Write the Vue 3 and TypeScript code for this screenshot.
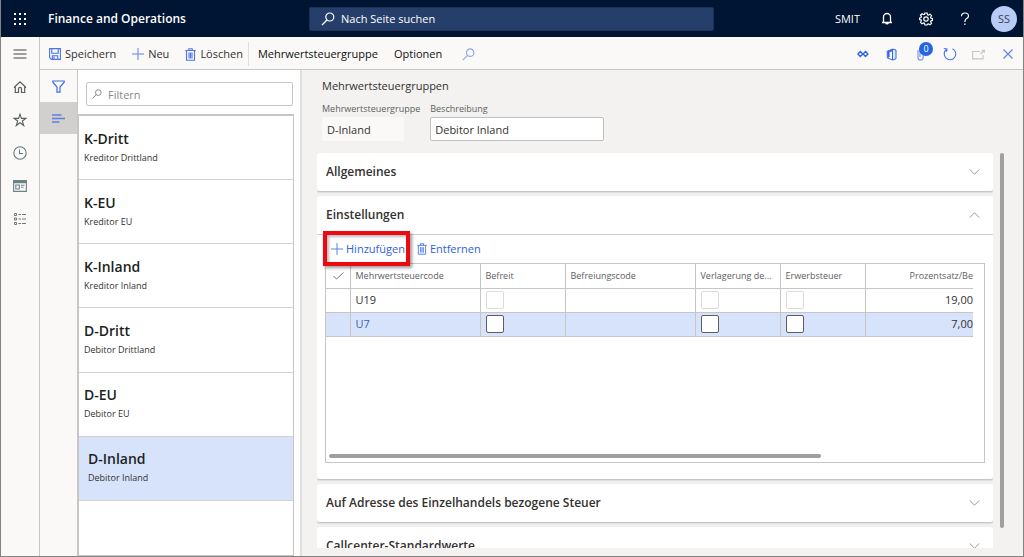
<script setup lang="ts">
import { ref } from 'vue'

interface Group { code: string; name: string }
interface TaxLine { code: string; exempt: boolean; reverse: boolean; useTax: boolean; percent: string; selected: boolean }

const groups: Group[] = [
  { code: 'K-Dritt', name: 'Kreditor Drittland' },
  { code: 'K-EU', name: 'Kreditor EU' },
  { code: 'K-Inland', name: 'Kreditor Inland' },
  { code: 'D-Dritt', name: 'Debitor Drittland' },
  { code: 'D-EU', name: 'Debitor EU' },
  { code: 'D-Inland', name: 'Debitor Inland' },
]
const active = ref('D-Inland')
const description = ref('Debitor Inland')
const pageSearch = ref('')
const filter = ref('')
const lines = ref<TaxLine[]>([
  { code: 'U19', exempt: false, reverse: false, useTax: false, percent: '19,00', selected: false },
  { code: 'U7', exempt: false, reverse: false, useTax: false, percent: '7,00', selected: true },
])
const lower = ['Auf Adresse des Einzelhandels bezogene Steuer', 'Callcenter-Standardwerte']
const dots = [1, 6, 11]
</script>

<template>
  <div class="app">
    <header class="top">
      <button class="icon waffle" aria-label="App-Startfeld">
        <svg width="14" height="14" viewBox="0 0 14 14" fill="#fff">
          <template v-for="y in dots" :key="y">
            <rect v-for="x in dots" :key="x" :x="x" :y="y" width="2" height="2" />
          </template>
        </svg>
      </button>
      <div class="brand">Finance and Operations</div>
      <label class="search">
        <svg width="14" height="14" viewBox="0 0 14 14" fill="none" stroke="#fff" stroke-width="1.2"><circle cx="8.8" cy="5" r="4" /><path d="M6 8 1 13" /></svg>
        <input v-model="pageSearch" aria-label="Nach Seite suchen" placeholder="Nach Seite suchen" />
      </label>
      <div class="account">
        <span class="company">SMIT</span>
        <button class="icon" aria-label="Benachrichtigungen">
          <svg width="12" height="14" viewBox="0 0 12 14" fill="none" stroke="#fff" stroke-width="1.3"><path d="M1 10.500h10M2.500 10.500V5a3.500 3.500 0 0 1 7 0v5.500M4.700 11a1.400 1.400 0 0 0 2.600 0" /></svg>
        </button>
        <button class="icon" aria-label="Einstellungen">
          <svg width="14" height="14" viewBox="0 0 14 14" fill="none" stroke="#fff" stroke-width="1.200"><path d="M5.900 1h2.200l.4 1.700 1 .4 1.500-.9 1.500 1.500-.9 1.500.4 1 1.500.3v1.900l-1.500.4-.4 1 .9 1.500-1.500 1.500-1.500-.9-1 .4L8.100 13H5.900l-.4-1.700-1-.4-1.500.9L1.500 10.300l.9-1.500-.4-1L.6 7.500V6l1.400-.4.4-1-.9-1.500L3 1.700l1.500.9 1-.4z" /><circle cx="7" cy="7" r="2.200" /></svg>
        </button>
        <button class="icon" aria-label="Hilfe">
          <svg width="10" height="14" viewBox="0 0 10 14" fill="none" stroke="#fff" stroke-width="1.200"><path d="M1.500 4.200C1.500 2 3 1 4.900 1S8.500 2.100 8.500 4 7 6.200 5.900 7.100C5 7.900 4.900 8.500 4.900 10M4.900 11.500v1.600" /></svg>
        </button>
        <button class="avatar">SS</button>
      </div>
    </header>

    <div class="body">
      <nav class="rail" aria-label="Navigation">
        <button class="icon" aria-label="Menü"><svg width="14" height="14" viewBox="0 0 14 14" stroke="#444" stroke-width="1.200"><path d="M.5 3h13M.5 7h13M.5 11h13" /></svg></button>
        <button class="icon" aria-label="Startseite"><svg width="14" height="14" viewBox="0 0 14 14" fill="none" stroke="#5a605e" stroke-width="1.200"><path d="M1 7.500 7 1.800l6 5.700M2.300 6.500v6h3.200V8.800a1.500 1.500 0 0 1 3 0v3.700h3.200v-6" /></svg></button>
        <button class="icon" aria-label="Favoriten"><svg width="14" height="14" viewBox="0 0 14 14" fill="none" stroke="#56605e" stroke-width="1.100"><path d="m7 1.200 1.400 4.200h4.400L9.300 8l1.400 4.500L7 9.800l-3.700 2.700L4.700 8 1.200 5.400h4.400z" /></svg></button>
        <button class="icon" aria-label="Zuletzt verwendet"><svg width="14" height="14" viewBox="0 0 14 14" fill="none" stroke="#667a80" stroke-width="1.100"><circle cx="7" cy="7" r="6.200" /><path d="M6.500 3.500V7.500H10" /></svg></button>
        <button class="icon" aria-label="Arbeitsbereiche"><svg width="14" height="14" viewBox="0 0 14 14" fill="none" stroke="#6b8286" stroke-width="1.100"><path d="M.6 1.600h12.800v10.800H.6zM.6 3.800h12.800M.6 2.700h12.800M2.800 6h3.500v4H2.800zM8 6.200h3.500M8 8.200h2.500" /></svg></button>
        <button class="icon" aria-label="Module"><svg width="14" height="14" viewBox="0 0 14 14" fill="none" stroke="#6e787e" stroke-width="1"><path d="M1.500 1.500h2v2h-2zM1.500 6h2v2h-2zM1.500 10.500h2v2h-2zM5.500 2.500H8M9 2.500h4M5.500 7H8M9 7h4M5.500 11.500H8M9 11.500h4" /></svg></button>
      </nav>

      <div class="work">
        <div class="bar" role="toolbar">
          <button class="cmd save"><svg width="12" height="12" viewBox="0 0 12 12" fill="none" stroke="#4a74e8" stroke-width="1.100"><path d="M.6.6h10.800v10.800H2.400L.6 9.800zM2.800.6v4.600h6.400V.6M3.300 11.400V7.800h5.400v3.600M5 8.500v2.500" /></svg>Speichern</button>
          <button class="cmd new"><svg width="12" height="12" viewBox="0 0 12 12" stroke="#5d82ee"><path d="M6 0v12M0 6h12" /></svg>Neu</button>
          <button class="cmd"><svg width="11" height="13" viewBox="0 0 11 13" fill="none" stroke="#4a74e8" stroke-width="1.100"><path d="M.3 2.500h10.400M3.800 2.500V.7h3.400v1.800M1.500 2.500v9.700h8V2.500M4 4.500v6M5.500 4.500v6M7 4.500v6" /></svg>Löschen</button>
          <span class="sep"></span>
          <button class="cmd strong">Mehrwertsteuergruppe</button>
          <button class="cmd strong">Optionen</button>
          <button class="icon find" aria-label="Suchen"><svg width="13" height="13" viewBox="0 0 14 14" fill="none" stroke="#8fa5f2" stroke-width="1.200"><circle cx="8.800" cy="5" r="4" /><path d="M6 8 .8 13" /></svg></button>
          <div class="tools">
            <button class="icon" aria-label="Power Apps"><svg width="12" height="8" viewBox="0 0 12 8" fill="none" stroke="#2f62e8" stroke-width="1.400"><path d="M3.300 1.500.9 4l2.400 2.500L5.700 4zM8.500 1.500 6.100 4l2.400 2.500L10.900 4z" /></svg></button>
            <button class="icon" aria-label="In Microsoft Office öffnen"><svg width="11" height="13" viewBox="0 0 11 13" fill="none" stroke="#3468e8"><path d="M6.500 1 1.200 3v6.800l2-.8V4l3.300-1z" fill="#3468e8" stroke-width=".6" /><path d="M6.500 1v11l3.500-1.200V2z" fill="#dfe7fc" /><path d="M1.200 9.800 6.500 12" /></svg></button>
            <button class="icon attach" aria-label="Anlagen"><svg width="8" height="14" viewBox="0 0 8 14" fill="none" stroke="#7c98ee" stroke-width="1.200"><path d="M1 3v7.500a2.600 2.600 0 0 0 5.200 0V3a1.600 1.600 0 0 0-3.200 0v7" /></svg><span class="badge">0</span></button>
            <button class="icon" aria-label="Aktualisieren"><svg width="14" height="14" viewBox="0 0 14 14" fill="none" stroke="#4a74e8" stroke-width="1.100"><path d="M9.500 1.700A5.800 5.800 0 1 1 3.500 2.300M.8 1.500l3.200.4-.5 3" /></svg></button>
            <button class="icon" aria-label="In neuem Fenster öffnen"><svg width="13" height="11" viewBox="0 0 13 11" fill="none" stroke="#c6c4c2" stroke-width="1.100"><path d="M8 2.500H.6v7.400h10.400V6M8.500 5l3.500-3.500M9.800 1.200h2.500v2.500" /></svg></button>
            <button class="icon" aria-label="Schließen"><svg width="10" height="10" viewBox="0 0 10 10" stroke="#5d82ee" stroke-width="1.100"><path d="m.5.5 9 9M9.500.5l-9 9" /></svg></button>
          </div>
        </div>

        <div class="content">
          <div class="modes">
            <button class="icon" aria-label="Filter"><svg width="13" height="13" viewBox="0 0 13 13" fill="none" stroke="#3f6de6" stroke-width="1.200"><path d="M.8 1h11.400v1.200L8 7v5.200H5V7L.8 2.200z" /></svg></button>
            <button class="icon on" aria-label="Liste"><svg width="13" height="9" viewBox="0 0 13 9" stroke="#5a7de8" stroke-width="1.300"><path d="M0 1h9.500M0 4.500h13M0 8h7.500" /></svg></button>
          </div>

          <aside class="side">
            <label class="filter">
              <svg width="10" height="10" viewBox="0 0 14 14" fill="none" stroke="#888" stroke-width="1.400"><circle cx="8.800" cy="5" r="4" /><path d="M6 8 .8 13" /></svg>
              <input v-model="filter" aria-label="Filtern" placeholder="Filtern" />
            </label>
            <ul class="list">
              <li v-for="g in groups" :key="g.code">
                <button class="item" :class="{ active: g.code === active }" @click="active = g.code">
                  <span class="code">{{ g.code }}</span>
                  <span class="name">{{ g.name }}</span>
                </button>
              </li>
            </ul>
          </aside>

          <main class="main">
            <h1>Mehrwertsteuergruppen</h1>
            <div class="fields">
              <div class="field">
                <label for="grp">Mehrwertsteuergruppe</label>
                <input id="grp" class="ro" value="D-Inland" readonly />
              </div>
              <div class="field">
                <label for="desc">Beschreibung</label>
                <input id="desc" v-model="description" />
              </div>
            </div>

            <div class="scroller">
              <div class="cards">
                <section class="card">
                  <button class="head">Allgemeines<svg width="11" height="6" viewBox="0 0 11 6" fill="none" stroke="#999"><path d="m.8.5 4.700 4.700L10.200.5" /></svg></button>
                </section>
                <section class="card open">
                  <button class="head">Einstellungen<svg width="11" height="6" viewBox="0 0 11 6" fill="none" stroke="#999"><path d="M.8 5.500 5.500.8l4.700 4.700" /></svg></button>
                  <div class="actions">
                    <button class="act marked"><svg width="12" height="12" viewBox="0 0 12 12" stroke="#5d82ee"><path d="M6 0v12M0 6h12" /></svg>Hinzufügen</button>
                    <button class="act"><svg width="10" height="12" viewBox="0 0 11 13" fill="none" stroke="#5d82ee" stroke-width="1.100"><path d="M.3 2.500h10.400M3.800 2.500V.7h3.400v1.800M1.500 2.500v9.700h8V2.500M4 4.500v6M5.500 4.500v6M7 4.500v6" /></svg>Entfernen</button>
                  </div>
                  <div class="grid">
                    <table>
                      <colgroup><col class="c-mark" /><col class="c-wide" /><col class="c-flag" /><col class="c-wide" /><col class="c-flag" /><col class="c-flag" /><col /></colgroup>
                      <thead>
                        <tr>
                          <th class="mark" aria-label="Auswahl"><svg width="11" height="8" viewBox="0 0 11 8" fill="none" stroke="#777"><path d="m.5 4 3 3L10.500.5" /></svg></th>
                          <th>Mehrwertsteuercode</th><th>Befreit</th><th>Befreiungscode</th><th>Verlagerung de...</th><th>Erwerbsteuer</th><th class="num">Prozentsatz/Be</th>
                        </tr>
                      </thead>
                      <tbody>
                        <tr v-for="l in lines" :key="l.code" :class="{ sel: l.selected }">
                          <td></td>
                          <td class="link">{{ l.code }}</td>
                          <td><input v-model="l.exempt" type="checkbox" aria-label="Befreit" /></td>
                          <td></td>
                          <td><input v-model="l.reverse" type="checkbox" aria-label="Verlagerung" /></td>
                          <td><input v-model="l.useTax" type="checkbox" aria-label="Erwerbsteuer" /></td>
                          <td class="num">{{ l.percent }}</td>
                        </tr>
                      </tbody>
                    </table>
                    <div class="hbar"></div>
                  </div>
                </section>
                <section v-for="t in lower" :key="t" class="card">
                  <button class="head">{{ t }}<svg width="11" height="6" viewBox="0 0 11 6" fill="none" stroke="#999"><path d="m.8.5 4.700 4.700L10.200.5" /></svg></button>
                </section>
              </div>
              <div class="vbar"></div>
            </div>
          </main>
        </div>
      </div>
    </div>
  </div>
</template>

<style>
body { margin: 0; overflow: hidden; }
</style>

<style scoped>
* { box-sizing: border-box; }
.app { display: flex; flex-direction: column; height: 100vh; font-family: "Open Sans", "Noto Sans", sans-serif; font-size: 11px; line-height: 16px; color: #323130; background: #faf9f8; border: 1px solid #858381; border-top: 0; }
button, input { font: inherit; color: inherit; }
button { display: flex; align-items: center; border: 0; padding: 0; background: none; text-align: left; white-space: nowrap; }
input { min-width: 0; border: 0; padding: 0; outline: 0; background: none; }
svg { flex: none; display: block; }
.icon { justify-content: center; flex: none; }

.top { display: grid; grid-template-columns: 38px 270px minmax(0, 405px) 1fr; align-items: center; height: 37px; flex: none; background: #001433; color: #fff; }
.brand { padding-left: 9px; font-size: 12px; font-weight: 600; white-space: nowrap; }
.search { display: flex; align-items: center; gap: 6px; height: 24px; padding-left: 11px; background: #263f6a; border: 1px solid #1d3157; border-radius: 2px; }
.search input { flex: 1; }
.search input::placeholder { color: #fff; opacity: 1; }
.account { display: flex; align-items: center; justify-content: flex-end; padding-right: 6px; }
.company { margin-right: 7px; }
.account .icon { width: 39px; }
.avatar { justify-content: center; width: 26px; height: 26px; margin-left: 7px; border-radius: 50%; background: #b9cbf7; color: #3b4252; }

.body { display: flex; flex: 1; min-height: 0; }
.rail { flex: none; width: 39px; margin-right: -1px; border-right: 1px solid #c8c6c4; }
.rail .icon { width: 38px; height: 33px; }
.work { flex: 1; min-width: 0; display: flex; flex-direction: column; }
.bar { display: flex; align-items: center; flex: none; height: 33px; padding: 2px 10px 0; border-bottom: 1px solid #c8c6c4; }
.cmd { gap: 4px; margin-right: 16px; }
.cmd.strong { font-weight: 500; color: #11100f; }
.sep { width: 1px; height: 24px; margin: 0 9px 0 -11px; background: #e1dfdd; }
.find { margin-left: 4px; }
.tools { display: flex; margin-left: auto; }
.tools .icon { width: 29px; height: 26px; }
.tools .icon:last-child { margin-right: -9px; }
.attach { position: relative; }
.badge { position: absolute; top: 1px; left: 13px; width: 14px; height: 14px; border-radius: 50%; background: #2266e3; color: #fff; font-size: 9px; line-height: 14px; text-align: center; }

.content { flex: 1; min-height: 0; display: flex; }
.modes { flex: none; width: 38px; border-left: 1px solid #c8c6c4; }
.modes .icon { width: 100%; height: 32px; }
.modes .on { background: #d2d0ce; }
.side { flex: none; width: 225px; display: flex; flex-direction: column; padding-right: 6px; background: #fff; border-left: 1px solid #c8c6c4; border-right: 2px solid #e1dfdd; }
.filter { display: flex; align-items: center; gap: 6px; height: 24px; flex: none; margin: 12px 1px 8px 8px; padding-left: 5px; border: 1px solid #c8c6c4; border-radius: 2px; }
.filter input { flex: 1; padding-top: 2px; }
.filter input::placeholder { color: #8a8886; opacity: 1; }
.list { flex: 1; display: grid; grid-auto-rows: 1fr; margin: 0; padding: 0 0 54px; list-style: none; border: 1px solid #c8c6c4; border-top-width: 2px; }
.list li { display: flex; border-bottom: 1px solid #d2d0ce; }
.item { flex: 1; flex-direction: column; align-items: flex-start; justify-content: center; padding: 0 5px; }
.item.active { padding-left: 9px; background: #d7e3fb; }
.code { font-size: 14px; line-height: 20px; font-weight: 600; color: #201f1e; }
.name { font-size: 9px; line-height: 18px; }

.main { flex: 1; min-width: 0; display: flex; flex-direction: column; padding: 8px 19px 8px 15px; background: #f3f2f1; }
h1 { margin: 0 5px; font-size: 11px; line-height: 16px; font-weight: 400; }
.fields { display: flex; gap: 10px; margin: 8px 5px 12px; }
.field { display: flex; flex-direction: column; }
.field label { font-size: 9px; line-height: 14px; margin-bottom: 1px; color: #605e5c; }
.field input { width: 174px; height: 24px; padding: 0 4px; border: 1px solid #c2c0be; border-radius: 2px; background: #fff; }
.field .ro { width: 82px; border-color: transparent; background: #faf9f8; }
.scroller { flex: 1; min-height: 0; display: flex; gap: 7px; }
.cards { flex: 1; min-width: 0; overflow: hidden; display: flex; flex-direction: column; gap: 5px; }
.card { flex: none; background: #fff; border-radius: 2px; box-shadow: 0 1px 2px #00000040; }
.card .head { justify-content: space-between; width: 100%; height: 38px; padding: 0 13px 0 9px; font-size: 12px; font-weight: 600; }
.card.open { padding-bottom: 16px; }
.open .head { height: 39px; border-bottom: 1px solid #d2d0ce; }
.actions { display: flex; gap: 12px; height: 28px; padding-left: 14px; }
.act { gap: 3px; color: #2f62dd; }
.marked { position: relative; }
.marked::after { content: ""; position: absolute; inset: -4px -5px -3px -8px; border: 4px solid #ee0810; box-shadow: 2px 2px 3px #0006, inset 2px 2px 3px #0004; }
.grid { display: flex; flex-direction: column; height: 200px; margin: 0 8px; padding: 0 11px 4px 0; border: 1px solid #c8c6c4; }
table { width: 100%; table-layout: fixed; border-collapse: collapse; }
.c-mark { width: 24px; }
.c-wide { width: 130px; }
.c-flag { width: 85px; }
th, td { height: 24px; padding: 0 5px; border-bottom: 1px solid #c8c6c4; border-left: 1px solid #c8c6c4; text-align: left; white-space: nowrap; overflow: hidden; }
th:first-child, td:first-child { border-left: 0; }
th { font-size: 9px; font-weight: 400; color: #605e5c; }
th.mark { padding-left: 7px; }
th.num, td.num { text-align: right; padding-right: 0; }
.sel { background: #d7e3fb; }
.sel .link { color: #3a5fb0; }
td input { display: block; appearance: none; width: 18px; height: 18px; margin: 0; border: 1px solid #dddbd9; border-radius: 2px; background: #fff; }
.sel input { border-color: #605e5c; }
.hbar { width: 76%; height: 4px; margin: auto 0 0 3px; border-radius: 2px; background: #a19f9d; }
.vbar { flex: none; width: 4px; margin-bottom: 20px; border-radius: 2px; background: #a19f9d; }
</style>
